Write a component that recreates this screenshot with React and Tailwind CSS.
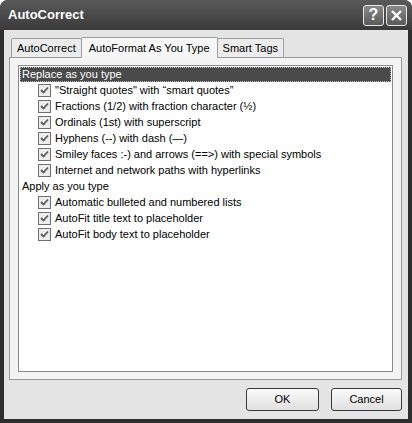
const REPLACE_ITEMS = [
  "\"Straight quotes\" with \u201Csmart quotes\u201D",
  "Fractions (1/2) with fraction character (\u00BD)",
  "Ordinals (1st) with superscript",
  "Hyphens (--) with dash (\u2014)",
  "Smiley faces :-) and arrows (==>) with special symbols",
  "Internet and network paths with hyperlinks",
];

const APPLY_ITEMS = [
  "Automatic bulleted and numbered lists",
  "AutoFit title text to placeholder",
  "AutoFit body text to placeholder",
];

const font = { fontFamily: "Tahoma, 'Liberation Sans', Arial, sans-serif" };

const Check = () => (
  <span className="w-[13px] h-[13px] border border-[#6f6f6f] bg-[#ececec] flex items-center justify-center shrink-0">
    <svg width="9" height="9" viewBox="0 0 9 9">
      <path d="M1 4 L3.5 6.5 L8 1.5" fill="none" stroke="#5a5a5a" strokeWidth="1.8" />
    </svg>
  </span>
);

const Item = ({ label }) => (
  <div className="h-[16px] flex items-center gap-[4px] pl-[18px]">
    <Check />
    <span>{label}</span>
  </div>
);

const TitleButton = ({ children }) => (
  <div className="w-[21px] h-[21px] rounded-[3px] border border-[#e8e8e8] bg-gradient-to-b from-[#8a8a8a] to-[#5a5a5a] flex items-center justify-center">
    {children}
  </div>
);

export default function App() {
  return (
    <div
      className="w-[412px] h-[423px] bg-[#2e2e2e] rounded-t-[8px] flex flex-col text-[11px] text-black"
      style={font}
    >
      <div className="h-[30px] flex items-center justify-between pl-[8px] pr-[5px] bg-gradient-to-b from-[#5a5a5a] to-[#3a3a3a] rounded-t-[8px]">
        <span className="text-white font-bold text-[13px]">AutoCorrect</span>
        <div className="flex gap-[2px]">
          <TitleButton>
            <span className="text-white font-bold text-[16px] leading-none">?</span>
          </TitleButton>
          <TitleButton>
            <svg width="13" height="13" viewBox="0 0 13 13">
              <path d="M2 2 L11 11 M11 2 L2 11" stroke="white" strokeWidth="2.4" />
            </svg>
          </TitleButton>
        </div>
      </div>

      <div className="flex-1 mx-[4px] mb-[4px] bg-[#e4e4e4] flex flex-col px-[5px] pt-[6px]">
        <div className="flex items-end h-[21px] pl-[2px]">
          <div className="h-[19px] px-[5px] flex items-center border border-b-0 border-[#a0a0a0] bg-[#ececec] rounded-t-[2px]">
            AutoCorrect
          </div>
          <div className="h-[21px] px-[7px] flex items-center border border-b-0 border-[#a0a0a0] bg-[#f6f6f6] rounded-t-[2px] relative top-[1px] -mx-[1px] z-10">
            AutoFormat As You Type
          </div>
          <div className="h-[19px] px-[5px] flex items-center border border-b-0 border-[#a0a0a0] bg-[#ececec] rounded-t-[2px]">
            Smart Tags
          </div>
        </div>

        <div className="h-[323px] w-[393px] border border-[#9a9a9a] bg-[#f4f4f4] px-[8px] pt-[7px]">
          <div className="h-[307px] border border-[#8a8a8a] bg-white pt-[1px] px-[1px]">
            <div className="h-[15px] bg-[#4a4a4a] text-white flex items-center px-[2px] outline-1 outline-dotted outline-[#bbbbbb] -outline-offset-1">
              Replace as you type
            </div>
            {REPLACE_ITEMS.map((t) => (
              <Item key={t} label={t} />
            ))}
            <div className="h-[16px] flex items-center pl-[2px]">Apply as you type</div>
            {APPLY_ITEMS.map((t) => (
              <Item key={t} label={t} />
            ))}
          </div>
        </div>

        <div className="flex justify-end gap-[12px] pt-[8px] pr-[1px]">
          <button className="w-[73px] h-[23px] border border-[#3a3a3a] rounded-[3px] bg-gradient-to-b from-[#fafafa] to-[#e0e0e0]">
            OK
          </button>
          <button className="w-[71px] h-[23px] border border-[#3a3a3a] rounded-[3px] bg-gradient-to-b from-[#fafafa] to-[#e0e0e0]">
            Cancel
          </button>
        </div>
      </div>
    </div>
  );
}
